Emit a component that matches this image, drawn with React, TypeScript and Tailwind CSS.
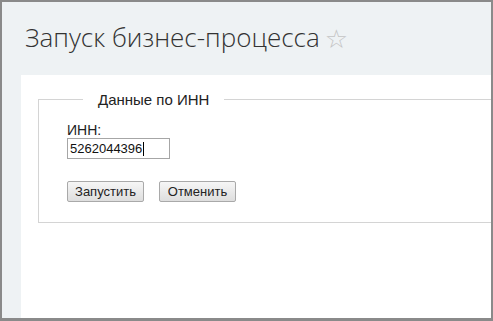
import React from "react";

export default function App() {
  return (
    <div className="w-[493px] h-[321px] overflow-hidden border-[#8a8a8a] border-t-2 border-l-2 border-r-2 border-b-[3px] bg-[#eef2f4] flex flex-col">
      <div className="h-[73px] shrink-0 flex items-start pl-[23px] pt-[18px]">
        <span
          className="text-[26px] leading-[34px] text-[#333333] font-light"
          style={{ fontFamily: '"Open Sans", sans-serif' }}
        >
          Запуск бизнес-процесса
        </span>
        <span className="ml-[5px] mt-[5px] text-[26px] leading-[28px] text-[#c4c4c4]" style={{ fontFamily: '"DejaVu Sans", sans-serif' }}>
          ☆
        </span>
      </div>
      <div className="flex-1 ml-[19px] bg-white overflow-hidden pt-[16px]" style={{ fontFamily: '"Liberation Sans", Arial, sans-serif' }}>
        <fieldset className="ml-[17px] w-[500px] h-[132px] border border-[#d4d4d4] pl-[28px] pt-[2px]">
          <legend className="ml-[16px] px-[15px] text-[15px] leading-[17px] text-[#222222]">Данные по ИНН</legend>
          <div className="text-[14px] leading-[16px] text-[#222222] mt-[12px]">ИНН:</div>
          <div className="w-[103px] h-[21px] border border-[#a6a6a6] flex items-center pl-[2px] text-[13px] text-[#111111]">
            5262044396<span className="w-px h-[14px] bg-black ml-px" />
          </div>
          <div className="flex gap-[15px] mt-[22px]">
            <button className="w-[77px] h-[21px] border border-[#a9a9a9] rounded-[2px] bg-gradient-to-b from-[#f6f6f6] to-[#dedede] text-[13px] leading-[19px] text-[#222222]">
              Запустить
            </button>
            <button className="w-[77px] h-[21px] border border-[#a9a9a9] rounded-[2px] bg-gradient-to-b from-[#f6f6f6] to-[#dedede] text-[13px] leading-[19px] text-[#222222]">
              Отменить
            </button>
          </div>
        </fieldset>
      </div>
    </div>
  );
}
